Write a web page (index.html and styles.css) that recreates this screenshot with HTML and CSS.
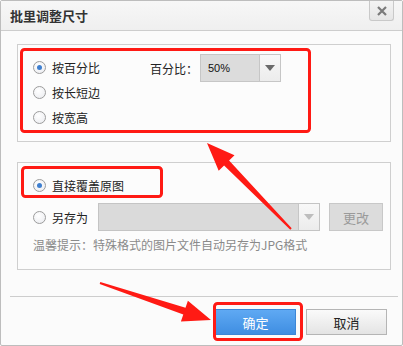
FILE: index.html
```html
<!DOCTYPE html>
<html lang="zh-CN">
<head>
  <meta charset="UTF-8">
  <title>批里调整尺寸</title>
  <link rel="stylesheet" href="styles.css">
</head>
<body>
  <div class="dialog">
    <div class="titlebar">
      <span class="title">批里调整尺寸</span>
      <span class="close">
        <svg width="12" height="12" viewBox="0 0 12 12"><path d="M2 2 L10 10 M10 2 L2 10" stroke="#7a7a7a" stroke-width="2.2"/></svg>
      </span>
    </div>

    <div class="content">
      <div class="group group-size">
        <div class="size-left">
          <div class="row"><span class="radio checked"></span>按百分比</div>
          <div class="row"><span class="radio"></span>按长短边</div>
          <div class="row"><span class="radio"></span>按宽高</div>
        </div>
        <div class="percent">
          <span class="label">百分比：</span>
          <div class="select">
            <span class="select-value">50%</span>
            <span class="select-btn"><span class="tri"></span></span>
          </div>
        </div>
      </div>

      <div class="group group-save">
        <div class="row"><span class="radio checked"></span>直接覆盖原图</div>
        <div class="row row-saveas">
          <span class="radio"></span><span class="saveas-label">另存为</span>
          <div class="select select-path disabled">
            <span class="select-value"></span>
            <span class="select-btn"><span class="tri"></span></span>
          </div>
          <span class="btn btn-change">更改</span>
        </div>
        <div class="hint">温馨提示：特殊格式的图片文件自动另存为JPG格式</div>
      </div>
    </div>

    <div class="footer">
      <span class="btn btn-ok">确定</span>
      <span class="btn btn-cancel">取消</span>
    </div>

    <!-- red annotations drawn over the dialog -->
    <svg class="marks" width="403" height="346" viewBox="0 0 403 346">
      <g fill="none" stroke="#ff1a14" stroke-width="3">
        <rect x="21.5" y="49.5" width="288" height="82" rx="3"/>
        <rect x="22.5" y="167.5" width="139" height="29" rx="3"/>
        <rect x="214.5" y="303.5" width="87" height="36" rx="3"/>
      </g>
      <g fill="#ff1a14">
        <polygon points="207,143 234.5,155.3 229.1,160.5 291.7,228.3 290.3,229.7 224.1,165.4 218.7,170.7"/>
        <polygon points="211,320 180.9,321.5 183.3,314.4 99.7,284 100.3,282 185.5,307.8 187.9,300.7"/>
      </g>
    </svg>
  </div>
</body>
</html>
```

FILE: styles.css
```css
body {
  margin: 0;
  font-family: "Noto Sans CJK SC", "Liberation Sans", sans-serif;
  font-size: 12px;
  color: #222;
  background-color: #fbfbfb;
}

.dialog {
  position: relative;
  width: 403px;
  height: 346px;
  box-sizing: border-box;
  border: 1px solid #bdbdbd;
  border-radius: 2px;
  background-color: #fbfbfb;
}

.titlebar {
  display: flex;
  justify-content: space-between;
  align-items: flex-start;
  height: 29px;
  border-bottom: 1px solid #cdcdcd;
  background: linear-gradient(#f7f7f7, #efefef);
}

.title {
  margin-left: 9px;
  line-height: 29px;
  font-size: 13px;
  font-weight: bold;
  color: #333;
}

.close {
  display: flex;
  justify-content: center;
  align-items: center;
  width: 23px;
  height: 19px;
  margin-right: 8px;
  border: 1px solid #c9c9c9;
  border-top: none;
  border-radius: 0 0 3px 3px;
  background: linear-gradient(#f4f4f4, #e6e6e6);
}

.content {
  padding: 13px 11px 0 16px;
}

.group {
  border: 1px solid #cfcfcf;
  background-color: #fcfcfc;
}

.group-size {
  display: flex;
  height: 96px;
  box-sizing: content-box;
}

.size-left {
  padding: 10px 0 0 15px;
  width: 117px;
}

.row {
  display: flex;
  align-items: center;
  height: 24px;
  margin-bottom: 1px;
  white-space: nowrap;
}

.radio {
  display: inline-block;
  width: 11px;
  height: 11px;
  margin-right: 6px;
  border: 1px solid #9c9c9c;
  border-radius: 50%;
  background: radial-gradient(circle at 40% 35%, #ffffff, #e9eaee);
  position: relative;
  flex: none;
}

.radio.checked::after {
  content: "";
  position: absolute;
  left: 3px;
  top: 3px;
  width: 5px;
  height: 5px;
  border-radius: 50%;
  background-color: #3f7fcf;
}

.percent {
  display: flex;
  align-items: center;
  height: 28px;
  margin-top: 9px;
}

.label {
  width: 50px;
}

.select {
  display: flex;
  width: 79px;
  height: 26px;
  border: 1px solid #c6c6c6;
  background-color: #dcdcdc;
}

.select-value {
  flex: 1;
  line-height: 26px;
  padding-left: 7px;
  font-family: "Liberation Sans", sans-serif;
  font-size: 11px;
  color: #111;
}

.select-btn {
  display: flex;
  justify-content: center;
  align-items: center;
  width: 20px;
  border-left: 1px solid #c6c6c6;
  background: linear-gradient(#f8f8f8, #ececec);
}

.tri {
  width: 0;
  height: 0;
  border-left: 5px solid transparent;
  border-right: 5px solid transparent;
  border-top: 6px solid #6a6a6a;
}

.group-save {
  margin-top: 20px;
  padding: 10px 0 16px 15px;
}

.row-saveas {
  height: 28px;
  margin-top: 6px;
}

.saveas-label {
  width: 46px;
}

.select-path {
  width: 220px;
}

.select.disabled {
  background-color: #dadada;
  border-color: #c4c4c4;
}

.select.disabled .tri {
  border-top-color: #bdbdbd;
}

.btn {
  display: inline-flex;
  justify-content: center;
  align-items: center;
  box-sizing: border-box;
  font-size: 13px;
}

.btn-change {
  width: 54px;
  height: 28px;
  margin-left: 9px;
  border: 1px solid #c8c8c8;
  background-color: #dcdcdc;
  color: #9a9a9a;
}

.hint {
  margin-top: 6px;
  line-height: 16px;
  color: #8a8a8a;
}

.footer {
  display: flex;
  justify-content: flex-end;
  gap: 10px;
  margin: 26px 4px 0 9px;
  padding: 12px 11px 0 0;
  border-top: 1px solid #cdcdcd;
}

.btn-ok {
  width: 81px;
  height: 26px;
  border: 1px solid #3c86d6;
  background: linear-gradient(#5fa9f3, #3f8ee2);
  color: #fff;
}

.btn-cancel {
  width: 81px;
  height: 26px;
  border: 1px solid #b5b5b5;
  background: linear-gradient(#fafafa, #e4e4e4);
  color: #222;
}

.marks {
  position: absolute;
  left: -1px;
  top: -1px;
  pointer-events: none;
}
```
